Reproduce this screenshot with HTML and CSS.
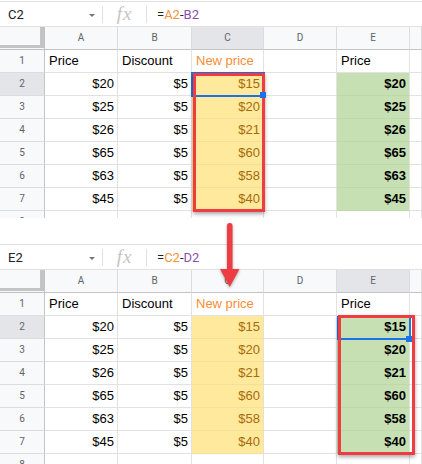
FILE: index.html
```html
<!DOCTYPE html>
<html>
<head>
<meta charset="utf-8">
<link rel="stylesheet" href="styles.css">
</head>
<body>
<section class="sheet s1">
  <div class="fbar">
    <div class="namebox"><span>C2</span><span class="caret"></span></div>
    <div class="sep"></div>
    <div class="fx">fx</div>
    <div class="sep"></div>
    <div class="formula">=<span class="ro">A2</span>-<span class="rp">B2</span></div>
  </div>
  <div class="grid">
    <div class="corner"></div><div class="hd">A</div><div class="hd">B</div><div class="hd on">C</div><div class="hd">D</div><div class="hd">E</div><div class="hd"></div>
    <div class="rh">1</div><div class="c">Price</div><div class="c">Discount</div><div class="c t">New price</div><div class="c"></div><div class="c">Price</div><div class="c"></div>
    <div class="rh on">2</div><div class="c r">$20</div><div class="c r">$5</div><div class="c r y">$15</div><div class="c"></div><div class="c r g">$20</div><div class="c"></div>
    <div class="rh">3</div><div class="c r">$25</div><div class="c r">$5</div><div class="c r y">$20</div><div class="c"></div><div class="c r g">$25</div><div class="c"></div>
    <div class="rh">4</div><div class="c r">$26</div><div class="c r">$5</div><div class="c r y">$21</div><div class="c"></div><div class="c r g">$26</div><div class="c"></div>
    <div class="rh">5</div><div class="c r">$65</div><div class="c r">$5</div><div class="c r y">$60</div><div class="c"></div><div class="c r g">$65</div><div class="c"></div>
    <div class="rh">6</div><div class="c r">$63</div><div class="c r">$5</div><div class="c r y">$58</div><div class="c"></div><div class="c r g">$63</div><div class="c"></div>
    <div class="rh">7</div><div class="c r">$45</div><div class="c r">$5</div><div class="c r y">$40</div><div class="c"></div><div class="c r g">$45</div><div class="c"></div>
    <div class="rh">8</div><div class="c"></div><div class="c"></div><div class="c"></div><div class="c"></div><div class="c"></div><div class="c"></div>
  </div>
  <div class="sel sel1"></div>
  <div class="box box1"></div>
  <div class="handle handle1"></div>
</section>

<section class="sheet s2">
  <div class="fbar">
    <div class="namebox"><span>E2</span><span class="caret"></span></div>
    <div class="sep"></div>
    <div class="fx">fx</div>
    <div class="sep"></div>
    <div class="formula">=<span class="ro">C2</span>-<span class="rp">D2</span></div>
  </div>
  <div class="grid">
    <div class="corner"></div><div class="hd">A</div><div class="hd">B</div><div class="hd">C</div><div class="hd">D</div><div class="hd on">E</div><div class="hd"></div>
    <div class="rh">1</div><div class="c">Price</div><div class="c">Discount</div><div class="c t">New price</div><div class="c"></div><div class="c">Price</div><div class="c"></div>
    <div class="rh on">2</div><div class="c r">$20</div><div class="c r">$5</div><div class="c r y">$15</div><div class="c"></div><div class="c r g">$15</div><div class="c"></div>
    <div class="rh">3</div><div class="c r">$25</div><div class="c r">$5</div><div class="c r y">$20</div><div class="c"></div><div class="c r g">$20</div><div class="c"></div>
    <div class="rh">4</div><div class="c r">$26</div><div class="c r">$5</div><div class="c r y">$21</div><div class="c"></div><div class="c r g">$21</div><div class="c"></div>
    <div class="rh">5</div><div class="c r">$65</div><div class="c r">$5</div><div class="c r y">$60</div><div class="c"></div><div class="c r g">$60</div><div class="c"></div>
    <div class="rh">6</div><div class="c r">$63</div><div class="c r">$5</div><div class="c r y">$58</div><div class="c"></div><div class="c r g">$58</div><div class="c"></div>
    <div class="rh">7</div><div class="c r">$45</div><div class="c r">$5</div><div class="c r y">$40</div><div class="c"></div><div class="c r g">$40</div><div class="c"></div>
    <div class="rh">8</div><div class="c"></div><div class="c"></div><div class="c"></div><div class="c"></div><div class="c"></div><div class="c"></div>
  </div>
  <div class="sel sel2"></div>
  <div class="box box2"></div>
  <div class="handle handle2"></div>
</section>

<div class="arrow">
  <svg width="28" height="72" viewBox="0 0 28 72">
    <rect x="11" y="3" width="5.5" height="48" rx="2.7" fill="#ee3d42"/>
    <polygon points="4,49 23.5,49 13.7,67" fill="#ee3d42"/>
  </svg>
</div>
</body>
</html>
```

FILE: styles.css
```css
html, body {
  margin: 0;
  padding: 0;
}
body {
  position: relative;
  width: 422px;
  height: 464px;
  overflow: hidden;
  background: #fff;
  font-family: "Liberation Sans", Arial, sans-serif;
  color: #000;
}
.sheet {
  position: relative;
  overflow: hidden;
}
.s1 {
  margin-top: 1px;
  height: 217px;
}
.s2 {
  margin-top: 26px;
  height: 220px;
}
.fbar {
  display: flex;
  align-items: center;
  height: 26px;
  box-sizing: border-box;
  border-top: 1px solid #e1e1e1;
  border-bottom: 1px solid #e1e1e1;
  font-family: Roboto, "Liberation Sans", sans-serif;
  font-size: 13px;
  color: #202124;
}
.namebox {
  width: 102px;
  box-sizing: border-box;
  padding-left: 8px;
  display: flex;
  align-items: center;
}
.caret {
  margin-left: auto;
  margin-right: 7px;
  width: 0;
  height: 0;
  border-left: 3px solid transparent;
  border-right: 3px solid transparent;
  border-top: 3px solid #757575;
  margin-top: 2px;
}
.sep {
  width: 1px;
  height: 17px;
  background: #e0e0e0;
}
.fx {
  width: 43px;
  text-align: center;
  font-family: "Liberation Serif", serif;
  font-style: italic;
  font-size: 19px;
  letter-spacing: 1px;
  color: #c4c4c4;
  line-height: 20px;
}
.formula {
  padding-left: 10px;
}
.ro { color: #f4923a; }
.rp { color: #8a4fae; }

.grid {
  display: grid;
  grid-template-columns: 45px 73px 74px 72px 73px 73px 12px;
  grid-auto-rows: 23px;
}
.grid > div {
  box-sizing: border-box;
  border-right: 1px solid #e2e2e2;
  border-bottom: 1px solid #e2e2e2;
  white-space: nowrap;
  overflow: hidden;
}
.corner {
  background:
    linear-gradient(#c3c4c6, #c3c4c6) right 0 top 0 / 4px 21px no-repeat,
    linear-gradient(#c3c4c6, #c3c4c6) left 0 top 18px / 44px 3px no-repeat,
    #f8f9fa;
}
.grid > .corner {
  border-right: 1px solid #c0c0c0;
  border-bottom: 1px solid #c0c0c0;
}
.grid > .hd {
  background: #f8f9fa;
  color: #5f6368;
  font-family: Roboto, "Liberation Sans", sans-serif;
  font-size: 10px;
  line-height: 22px;
  text-align: center;
  border-right-color: #dadce0;
  border-bottom-color: #c4c4c4;
}
.grid > .rh {
  background: #f8f9fa;
  color: #5f6368;
  font-family: Roboto, "Liberation Sans", sans-serif;
  font-size: 10px;
  line-height: 22px;
  text-align: center;
  border-right-color: #c4c4c4;
  border-bottom-color: #dadce0;
}
.grid > .on {
  background: #e3e5e8;
}
.c {
  font-size: 13px;
  line-height: 22px;
  padding: 0 4px;
}
.r {
  text-align: right;
  padding-right: 3px;
}
.t {
  color: #f78e35;
}
.grid > .y {
  background: #fee99d;
  color: #a9690d;
  border-bottom-color: #f4df98;
  border-right-color: #e8e0c8;
}
.grid > .g {
  background: #c6e0b4;
  font-weight: bold;
  border-bottom-color: #bdd8ab;
}

.sel {
  position: absolute;
  box-sizing: border-box;
  border: 2px solid #1a73e8;
}
.sel1 {
  left: 191px;
  top: 71px;
  width: 74px;
  height: 25px;
}
.sel2 {
  left: 337px;
  top: 72px;
  width: 74px;
  height: 24px;
}
.box {
  position: absolute;
  box-sizing: border-box;
  border: 3px solid #f03b40;
  box-shadow: 0 2px 4px rgba(0, 0, 0, 0.35);
}
.box1 {
  left: 193px;
  top: 72px;
  width: 72px;
  height: 139px;
}
.box2 {
  left: 338px;
  top: 71px;
  width: 77px;
  height: 140px;
}
.handle {
  position: absolute;
  width: 6px;
  height: 6px;
  background: #1a73e8;
}
.handle1 {
  left: 260px;
  top: 91px;
}
.handle2 {
  left: 406px;
  top: 92px;
}
.arrow {
  position: absolute;
  left: 216px;
  top: 220px;
  width: 28px;
  height: 72px;
  filter: drop-shadow(0 1px 1.5px rgba(0, 0, 0, 0.35));
  z-index: 5;
}
.arrow svg {
  display: block;
}
```
